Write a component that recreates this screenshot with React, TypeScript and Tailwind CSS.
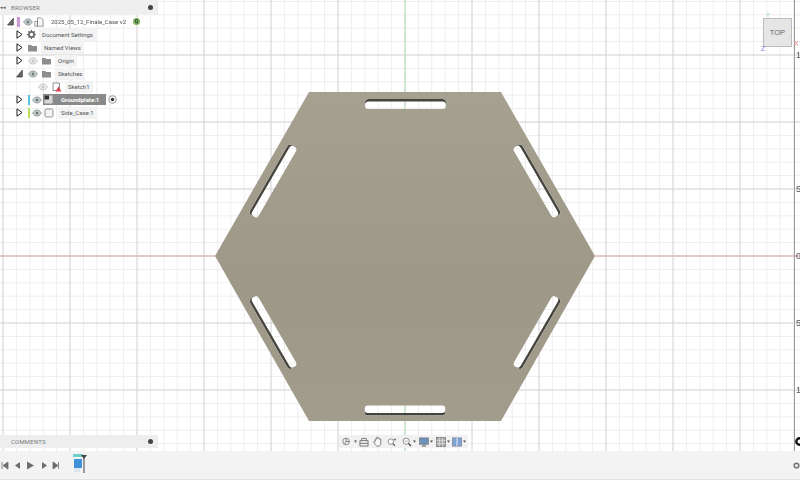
import React from "react";

const range = (n: number) => Array.from({ length: n }, (_, i) => i);
const minorX = range(62).map((i) => 405 + (i - 31) * 13.4);
const minorY = range(36).map((i) => 256 + (i - 20) * 13.4);
const majorX = range(12).map((i) => 3 + i * 67);
const majorY = range(7).map((i) => 55 + i * 67);

const slots = [
  { cx: 405.5, cy: 104, r: 0 },
  { cx: 405, cy: 410.5, r: 0 },
  { cx: 537, cy: 181, r: 60 },
  { cx: 273, cy: 181, r: -60 },
  { cx: 273, cy: 332.5, r: 60 },
  { cx: 537, cy: 332.5, r: -60 },
];

const Slot = ({ cx, cy, r, fill }: { cx: number; cy: number; r: number; fill: string }) => (
  <rect x={cx - 40.5} y={cy - 5} width="81" height="10" rx="3.5" fill={fill} transform={`rotate(${r} ${cx} ${cy})`} />
);

function Canvas() {
  return (
    <svg viewBox="0 0 800 451" className="absolute inset-0 w-[800px] h-[451px] block">
      <defs>
        <mask id="holes" maskUnits="userSpaceOnUse" x="0" y="0" width="800" height="451">
          <rect width="800" height="451" fill="white" />
          {slots.map((s, i) => (
            <Slot key={i} {...s} fill="black" />
          ))}
        </mask>
        <mask id="walls" maskUnits="userSpaceOnUse" x="0" y="0" width="800" height="451">
          <rect width="800" height="451" fill="white" />
          {slots.map((s, i) => {
            const dx = 405 - s.cx;
            const dy = 256 - s.cy;
            const n = Math.hypot(dx, dy);
            return <Slot key={i} cx={s.cx + (dx / n) * 2.4} cy={s.cy + (dy / n) * 2.4} r={s.r} fill="black" />;
          })}
        </mask>
        <linearGradient id="plate" x1="0" y1="0" x2="0" y2="1">
          <stop offset="0" stopColor="#a6a090" />
          <stop offset="0.6" stopColor="#9e9888" />
          <stop offset="1" stopColor="#a29c8c" />
        </linearGradient>
      </defs>
      <rect width="800" height="451" fill="#ffffff" />
      {minorX.map((x, i) => (
        <line key={i} x1={x} y1="0" x2={x} y2="451" stroke="#eeeeee" strokeWidth="1" />
      ))}
      {minorY.map((y, i) => (
        <line key={i} x1="0" y1={y} x2="800" y2={y} stroke="#eeeeee" strokeWidth="1" />
      ))}
      {majorX.map((x, i) => (
        <line key={i} x1={x} y1="0" x2={x} y2="451" stroke="#d8d8d8" strokeWidth="1" />
      ))}
      {majorY.map((y, i) => (
        <line key={i} x1="0" y1={y} x2="800" y2={y} stroke="#d8d8d8" strokeWidth="1" />
      ))}
      <line x1="0" y1="256" x2="800" y2="256" stroke="#e9a9a6" strokeWidth="1" />
      <line x1="405" y1="0" x2="405" y2="451" stroke="#b5e6b5" strokeWidth="1" />
      <line x1="794.5" y1="0" x2="794.5" y2="451" stroke="#9c9c9c" strokeWidth="1" />
      <g mask="url(#walls)">
        {slots.map((s, i) => (
          <Slot key={i} {...s} fill="#45433d" />
        ))}
      </g>
      <polygon points="215,256 309,92 501,92 595,256 501,421 309,421" fill="url(#plate)" mask="url(#holes)" />
      <g fontFamily="'Liberation Sans', sans-serif" fontSize="9" fill="#555555">
        <text x="796" y="58">1</text>
        <text x="796" y="192">5</text>
        <text x="796" y="259">0</text>
        <text x="796" y="326">5</text>
        <text x="796" y="393">1</text>
      </g>
      <circle cx="799.5" cy="441.5" r="3.2" fill="none" stroke="#111111" strokeWidth="2.4" />
    </svg>
  );
}

const Tri = ({ open }: { open?: boolean }) => (
  <svg width="7" height="9" viewBox="0 0 7 9" className="shrink-0">
    {open ? (
      <path d="M6.3 1.2V8H0.6Z" fill="#666" stroke="#333" strokeWidth="0.7" />
    ) : (
      <path d="M1 .8L6 4.5L1 8.2Z" fill="#fff" stroke="#222" strokeWidth="1" />
    )}
  </svg>
);

const Eye = ({ dim }: { dim?: boolean }) => (
  <svg width="10" height="8" viewBox="0 0 10 8" className="shrink-0">
    <path d="M.6 4C2.2 1.6 3.6 1 5 1s2.8.6 4.4 3C7.8 6.4 6.4 7 5 7S2.2 6.4.6 4Z" fill={dim ? "#eee" : "#c9d0d0"} stroke={dim ? "#b5b5b5" : "#7f8a8a"} strokeWidth="0.8" />
    <circle cx="5" cy="4" r="1.5" fill={dim ? "#c5c5c5" : "#6f7a7a"} />
  </svg>
);

const Folder = () => (
  <svg width="9" height="8" viewBox="0 0 9 8" className="shrink-0">
    <path d="M0 1h3.4l.8 1H9v5.5H0Z" fill="#8e8e8e" />
  </svg>
);

const Gear = () => (
  <svg width="9" height="9" viewBox="0 0 9 9" className="shrink-0">
    <circle cx="4.5" cy="4.5" r="2.6" fill="none" stroke="#666" strokeWidth="1.6" />
    <path d="M4.5 0v2M4.5 7v2M0 4.5h2M7 4.5h2M1.3 1.3l1.3 1.3M6.4 6.4l1.3 1.3M1.3 7.7l1.3-1.3M6.4 2.6l1.3-1.3" stroke="#666" strokeWidth="1.1" />
  </svg>
);

const Label = ({ children, className = "" }: { children: React.ReactNode; className?: string }) => (
  <span className={`h-[12px] flex items-center bg-[#f3f3f3] px-[3px] text-[6px] leading-none text-[#555] whitespace-nowrap ${className}`}>
    {children}
  </span>
);

const Row = ({ children, className = "" }: { children: React.ReactNode; className?: string }) => (
  <div className={`h-[13px] flex items-center ${className}`}>{children}</div>
);

function Browser() {
  return (
    <div className="absolute left-0 top-0 w-[158px] font-['Roboto','Liberation_Sans',sans-serif]">
      <div className="h-[15px] bg-[#efefef] flex items-center text-[6px] text-[#777] tracking-[0.2px]">
        <span className="w-[11px] text-[5px] text-[#555]">◂◂</span>
        <span>BROWSER</span>
        <span className="ml-auto mr-[5px] w-[5px] h-[5px] rounded-full bg-[#444]" />
      </div>
      <div>
        <Row className="pl-[7px]">
          <Tri open />
          <span className="ml-[3px] w-[3px] h-[10px] bg-[#c99ad6]" />
          <span className="ml-[3px]"><Eye /></span>
          <svg width="10" height="10" viewBox="0 0 10 10" className="ml-[1px] shrink-0">
            <path d="M3.5.8h3.2l2.3 2v6.4H3.5ZM.8 4.5h2.7v4.7H.8Z" fill="#f8f8f8" stroke="#777" strokeWidth="0.7" />
          </svg>
          <span className="ml-[7px] text-[6px] text-[#555] whitespace-nowrap w-[82px]">2025_05_12_Finale_Case v2</span>
          <span className="w-[7px] h-[7px] rounded-full bg-[#7fb65a] text-[5px] leading-[7px] text-center font-bold text-[#234]">Q</span>
        </Row>
        <Row className="pl-[16px]">
          <Tri />
          <span className="ml-[4px]"><Gear /></span>
          <Label className="ml-[3px]">Document Settings</Label>
        </Row>
        <Row className="pl-[16px]">
          <Tri />
          <span className="ml-[5px]"><Folder /></span>
          <Label className="ml-[4px]">Named Views</Label>
        </Row>
        <Row className="pl-[16px]">
          <Tri />
          <span className="ml-[5px]"><Eye dim /></span>
          <span className="ml-[4px]"><Folder /></span>
          <Label className="ml-[4px]">Origin</Label>
        </Row>
        <Row className="pl-[16px]">
          <Tri open />
          <span className="ml-[5px]"><Eye /></span>
          <span className="ml-[4px]"><Folder /></span>
          <Label className="ml-[4px]">Sketches</Label>
        </Row>
        <Row className="pl-[38px]">
          <Eye dim />
          <svg width="10" height="10" viewBox="0 0 10 10" className="ml-[4px] shrink-0">
            <path d="M1 1h6.5v7.5H1Z" fill="#fff" stroke="#777" strokeWidth="0.8" />
            <path d="M6.5 4.5L9.5 9.5H3.5Z" fill="#d9434e" />
          </svg>
          <Label className="ml-[3px]">Sketch1</Label>
        </Row>
        <Row className="pl-[16px]">
          <Tri />
          <span className="ml-[5px] w-[2px] h-[10px] bg-[#55c8e0]" />
          <span className="ml-[2px]"><Eye /></span>
          <span className="ml-[1px] h-[11px] w-[63px] bg-[#8a8a8a] flex items-center pl-[1px] text-[6px] font-bold text-white whitespace-nowrap">
            <svg width="9" height="9" viewBox="0 0 9 9" className="shrink-0 mr-[8px]">
              <path d="M.5.5h8v8h-8Z" fill="#d8d8d8" />
              <path d="M.5.5h4.500v4H.5Z" fill="#333" />
            </svg>
            Groundplate:1
          </span>
          <svg width="9" height="9" viewBox="0 0 9 9" className="ml-[2px] shrink-0">
            <circle cx="4.5" cy="4.5" r="3.8" fill="#f6f6f6" stroke="#777" strokeWidth="0.7" />
            <circle cx="4.5" cy="4.5" r="1.7" fill="#333" />
          </svg>
        </Row>
        <Row className="pl-[16px]">
          <Tri />
          <span className="ml-[5px] w-[2px] h-[10px] bg-[#bde05a]" />
          <span className="ml-[2px]"><Eye /></span>
          <svg width="10" height="10" viewBox="0 0 10 10" className="ml-[2px] shrink-0">
            <rect x="1" y="1" width="8" height="8" rx="1.6" fill="#f4f4f4" stroke="#777" strokeWidth="0.8" />
          </svg>
          <Label className="ml-[4px]">Side_Case:1</Label>
        </Row>
      </div>
    </div>
  );
}

const Caret = () => (
  <svg width="3" height="3" viewBox="0 0 4 3" className="shrink-0">
    <path d="M0 0h4L2 3Z" fill="#555" />
  </svg>
);

function NavBar() {
  return (
    <div className="absolute left-[339px] top-[435px] w-[129px] h-[13px] bg-[#f1f1f1] flex items-center pl-[3px]">
      <svg width="9" height="9" viewBox="0 0 11 11" className="shrink-0">
        <circle cx="5" cy="5.5" r="4" fill="none" stroke="#777" strokeWidth="1" />
        <path d="M5 1.5v4h4M5 5.5l-2 3" fill="none" stroke="#667" strokeWidth="1" />
      </svg>
      <span className="ml-[3px] flex"><Caret /></span>
      <svg width="10" height="10" viewBox="0 0 11 11" className="ml-[2px] shrink-0">
        <path d="M1 4h9v6H1ZM3 4V1.500h5V4M1 7h9" fill="#eee" stroke="#666" strokeWidth="0.9" />
      </svg>
      <svg width="10" height="11" viewBox="0 0 11 12" className="ml-[4px] shrink-0">
        <path d="M2.500 6V3.500a.8.8 0 0 1 1.500 0V2a.8.8 0 0 1 1.600 0v.8a.8.8 0 0 1 1.500 0v.8a.8.8 0 0 1 1.500 0V8c0 2-1.200 3.200-3 3.200-1.600 0-2.300-.7-3-1.800L1 7a.8.8 0 0 1 1.300-1Z" fill="#f8f8f8" stroke="#555" strokeWidth="0.8" />
      </svg>
      <svg width="10" height="10" viewBox="0 0 12 11" className="ml-[4px] shrink-0">
        <circle cx="4.500" cy="5" r="3.300" fill="#fff" stroke="#777" strokeWidth="1" />
        <path d="M7 7.500l2.500 2.500" stroke="#555" strokeWidth="1.300" />
        <path d="M9.500 1v3M8 2.500h3" stroke="#557" strokeWidth="0.8" />
      </svg>
      <svg width="10" height="10" viewBox="0 0 12 12" className="ml-[5px] shrink-0">
        <circle cx="5" cy="5" r="3.700" fill="#fff" stroke="#777" strokeWidth="1" />
        <path d="M3 5h4" stroke="#99a" strokeWidth="1" />
        <path d="M7.800 7.800l3 3" stroke="#444" strokeWidth="1.500" />
      </svg>
      <span className="ml-[1px] flex"><Caret /></span>
      <svg width="10" height="10" viewBox="0 0 11 11" className="ml-[3px] shrink-0">
        <rect x="0.500" y="1" width="10" height="7" fill="#6f92bd" stroke="#666" strokeWidth="0.6" />
        <path d="M3 10h5M5.500 8v2" stroke="#666" strokeWidth="1" />
      </svg>
      <span className="ml-[1px] flex"><Caret /></span>
      <svg width="10" height="10" viewBox="0 0 11 11" className="ml-[3px] shrink-0">
        <rect x="0.500" y="0.500" width="10" height="10" fill="#aaa" stroke="#666" strokeWidth="0.7" />
        <path d="M3.800 .5v10M7.200 .5v10M.5 3.800h10M.5 7.200h10" stroke="#eee" strokeWidth="0.6" />
      </svg>
      <span className="ml-[1px] flex"><Caret /></span>
      <svg width="10" height="10" viewBox="0 0 11 11" className="ml-[2px] shrink-0">
        <rect x="0.500" y="1" width="10" height="9" fill="#7ea4d6" stroke="#667" strokeWidth="0.6" />
        <path d="M5.500 1v9" stroke="#f4f4f4" strokeWidth="1" />
      </svg>
      <span className="ml-[1px] flex"><Caret /></span>
    </div>
  );
}

function Comments() {
  return (
    <div className="absolute left-0 top-[435px] w-[158px] h-[13px] bg-[#eeeeee] flex items-center pl-[11px] pr-[5px] text-[6px] text-[#777] tracking-[0.2px] font-['Roboto','Liberation_Sans',sans-serif]">
      <span>COMMENTS</span>
      <span className="ml-auto w-[5px] h-[5px] rounded-full bg-[#444]" />
    </div>
  );
}

function Timeline() {
  const c = "#6d6d6d";
  return (
    <div className="h-[29px] bg-[#f3f3f3] border-b border-b-[#e2e2e2] flex items-center pl-[1px] shrink-0">
      <svg width="60" height="9" viewBox="0 0 60 9" className="shrink-0">
        <path d="M1 1v7M7 1L2 4.500 7 8Z" fill={c} stroke={c} strokeWidth="0.8" />
        <path d="M19 1l-5 3.500 5 3.500Z" fill={c} />
        <path d="M26 .5l7 4-7 4Z" fill={c} />
        <path d="M41 1l5 3.500-5 3.500Z" fill={c} />
        <path d="M52 1l5 3.500-5 3.500ZM57.500 1v7" fill={c} stroke={c} strokeWidth="0.8" />
      </svg>
      <svg width="16" height="22" viewBox="0 0 16 22" className="ml-[11px] shrink-0">
        <rect x="1" y="0" width="10" height="3" fill="#6fd0c8" />
        <rect x="2" y="5" width="8" height="9" fill="#3f92d8" />
        <rect x="2" y="14" width="6" height="4" fill="#dbe5ee" />
        <path d="M9 1h6l-3 4Z" fill="#444" />
        <path d="M12 3v16" stroke="#444" strokeWidth="1" />
      </svg>
      <svg width="7" height="7" viewBox="0 0 7 7" className="ml-auto shrink-0">
        <circle cx="3.500" cy="3.500" r="2.300" fill="none" stroke="#777" strokeWidth="1.600" />
      </svg>
    </div>
  );
}

function ViewCube() {
  return (
    <div className="absolute left-[763px] top-[18px] w-[29px] h-[29px] bg-[#e6e6e6] border border-[#bdbdbd] flex items-center justify-center text-[7.500px] text-[#666] font-['Liberation_Sans',sans-serif]">
      TOP
      <span className="absolute left-[2px] top-[-7px] text-[6px] leading-none text-[#7fd07f]">Y</span>
      <span className="absolute left-[-3px] top-[26px] text-[7px] leading-none text-[#7a78d8]">Z</span>
      <span className="absolute left-[30px] top-[21px] text-[7px] leading-none text-[#e58a8a]">X</span>
    </div>
  );
}

export default function App() {
  return (
    <div className="w-[800px] h-[480px] overflow-hidden flex flex-col bg-white font-['Roboto','Liberation_Sans',sans-serif]">
      <div className="relative flex-1">
        <Canvas />
        <Browser />
        <ViewCube />
        <Comments />
        <NavBar />
      </div>
      <Timeline />
    </div>
  );
}
